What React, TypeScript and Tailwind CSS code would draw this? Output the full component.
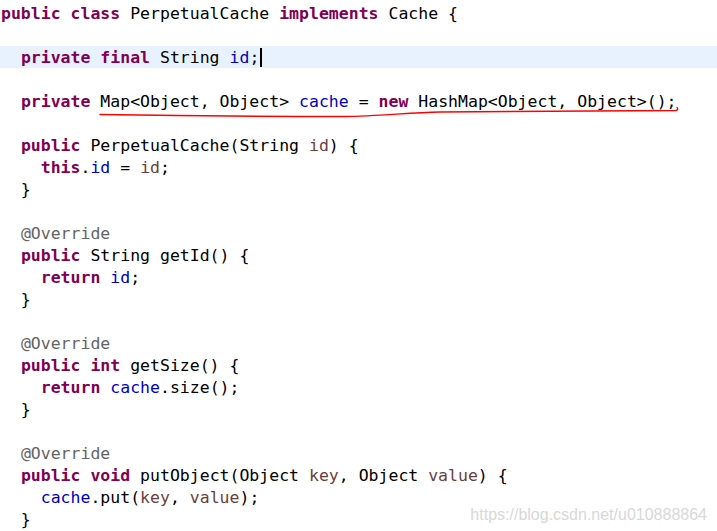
import React from 'react'

type Tok = [string, string?]

const K = 'text-[#7f0055] font-bold'
const F = 'text-[#0000c0]'
const L = 'text-[#6a3e3e]'
const A = 'text-[#646464]'

const lines: Tok[][] = [
  [['public class', K], [' PerpetualCache '], ['implements', K], [' Cache {']],
  [],
  [['  '], ['private final', K], [' String '], ['id', F], [';']],
  [],
  [['  '], ['private', K], [' Map<Object, Object> '], ['cache', F], [' = '], ['new', K], [' HashMap<Object, Object>();']],
  [],
  [['  '], ['public', K], [' PerpetualCache(String '], ['id', L], [') {']],
  [['    '], ['this', K], ['.'], ['id', F], [' = '], ['id', L], [';']],
  [['  }']],
  [],
  [['  '], ['@Override', A]],
  [['  '], ['public', K], [' String getId() {']],
  [['    '], ['return', K], [' '], ['id', F], [';']],
  [['  }']],
  [],
  [['  '], ['@Override', A]],
  [['  '], ['public int', K], [' getSize() {']],
  [['    '], ['return', K], [' '], ['cache', F], ['.size();']],
  [['  }']],
  [],
  [['  '], ['@Override', A]],
  [['  '], ['public void', K], [' putObject(Object '], ['key', L], [', Object '], ['value', L], [') {']],
  [['    '], ['cache', F], ['.put('], ['key', L], [', '], ['value', L], [');']],
  [['  }']],
]

export default function App() {
  return (
    <div className="relative w-[717px] h-[531px] overflow-hidden bg-white text-black">
      <div className="pt-[2px] font-['DejaVu_Sans_Mono',monospace] text-[16.5px] leading-[22px] whitespace-pre">
        {lines.map((line, i) => (
          <div key={i} className={i === 2 ? 'h-[22px] pl-[1px] pt-[2px] bg-[#e8f2fe] flex items-center' : 'h-[22px] pl-[1px] pt-[2px] flex items-center'}>
            {line.map(([t, c], j) => (
              <span key={j} className={c}>{t}</span>
            ))}
            {i === 2 && <span className="ml-[1px] -mt-[1px] w-[2px] h-[19px] bg-black" />}
          </div>
        ))}
      </div>

      {/* red hand-drawn underline */}
      <svg className="absolute left-0 top-0 pointer-events-none" width="717" height="531">
        <path
          d="M100 114.5 C 160 115.5, 250 116.5, 345 116.5 C 380 116, 410 112.5, 440 112 C 520 111, 600 111, 676 110.5 C 678 110, 678 108.5, 677 107.5"
          fill="none"
          stroke="#ff0000"
          strokeWidth="1.4"
          strokeLinecap="round"
        />
      </svg>

      {/* watermark */}
      <div className="absolute right-[10px] bottom-[8px] font-['Liberation_Sans',Arial,sans-serif] text-[16px] leading-none text-[#d8d8d8]">
        https://blog.csdn.net/u010888864
      </div>
    </div>
  )
}
